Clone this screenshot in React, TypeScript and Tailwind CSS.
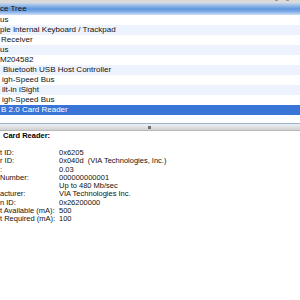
import React from 'react';

const treeRows = [
  { text: 'us', pad: 'pl-0' },
  { text: 'ple Internal Keyboard / Trackpad', pad: 'pl-0' },
  { text: 'Receiver', pad: 'pl-[1px]' },
  { text: 'us', pad: 'pl-0' },
  { text: 'M204582', pad: 'pl-0' },
  { text: 'Bluetooth USB Host Controller', pad: 'pl-[3px]' },
  { text: 'igh-Speed Bus', pad: 'pl-[2px]' },
  { text: 'ilt-in iSight', pad: 'pl-[2px]' },
  { text: 'igh-Speed Bus', pad: 'pl-[2px]' },
  { text: 'B 2.0 Card Reader', pad: 'pl-[1px]' },
];

const details = [
  ['t ID:', '0x6205'],
  ['r ID:', '0x040d  (VIA Technologies, Inc.)'],
  [':', '0.03'],
  ['Number:', '000000000001'],
  ['', 'Up to 480 Mb/sec'],
  ['acturer:', 'VIA Technologies Inc.'],
  ['n ID:', '0x26200000'],
  ['t Available (mA):', '500'],
  ['t Required (mA):', '100'],
];

export default function App() {
  const selected = 9;

  return (
    <div className="w-[300px] h-[300px] bg-white overflow-hidden text-black font-['Liberation_Sans',Arial,sans-serif]">
      {/* toolbar edge */}
      <div className="relative h-[3px] bg-[#dadada]">
        <div className="absolute left-[275px] top-0 w-[3px] h-[1px] bg-[#9a9a9a]" />
        <div className="absolute left-[286px] top-0 w-[3px] h-[1px] bg-[#9a9a9a]" />
      </div>

      {/* column header */}
      <div className="h-[12px] bg-[linear-gradient(to_bottom,#c9d8ec_0%,#8fb5e6_25%,#5f97de_50%,#7eaae6_70%,#b3cff2_90%,#cfe0f7_100%)] text-[8px] leading-[12px] whitespace-nowrap text-[#111]">
        ce Tree
      </div>

      {/* device tree */}
      <div>
        {treeRows.map((r, i) => (
          <div
            key={i}
            className={
              'h-[10px] text-[8px] leading-[10px] whitespace-nowrap ' +
              r.pad +
              ' ' +
              (i === selected
                ? 'bg-[#3875d7] text-white'
                : i % 2 === 1
                ? 'bg-[#edf3fe] text-[#111]'
                : 'bg-white text-[#111]')
            }
          >
            {r.text}
          </div>
        ))}
      </div>

      <div className="h-[8px] bg-white" />

      {/* splitter */}
      <div className="relative">
        <div className="h-[1px] bg-[#a3b2c7]" />
        <div className="h-[2px] bg-[#e3ebf6]" />
        <div className="h-[4px] bg-[linear-gradient(to_bottom,#e6e6e6,#d0d0d0)]" />
        <div className="h-[1px] bg-[#b9b9b9]" />
        <div className="absolute left-[148px] top-[3px] w-[3px] h-[3px] bg-[#6f6f6f]" />
      </div>

      {/* detail pane */}
      <div className="pt-px">
        <div className="pl-[3px] text-[7.5px] leading-[8px] font-bold whitespace-nowrap">Card Reader:</div>
        <div className="mt-[9px]">
          {details.map(([label, value], i) => (
            <div key={i} className="flex h-[8.25px] text-[7.5px] leading-[8.25px] whitespace-pre text-[#111]">
              <div className="w-[59px] shrink-0">{label}</div>
              <div>{value}</div>
            </div>
          ))}
        </div>
      </div>
    </div>
  );
}
